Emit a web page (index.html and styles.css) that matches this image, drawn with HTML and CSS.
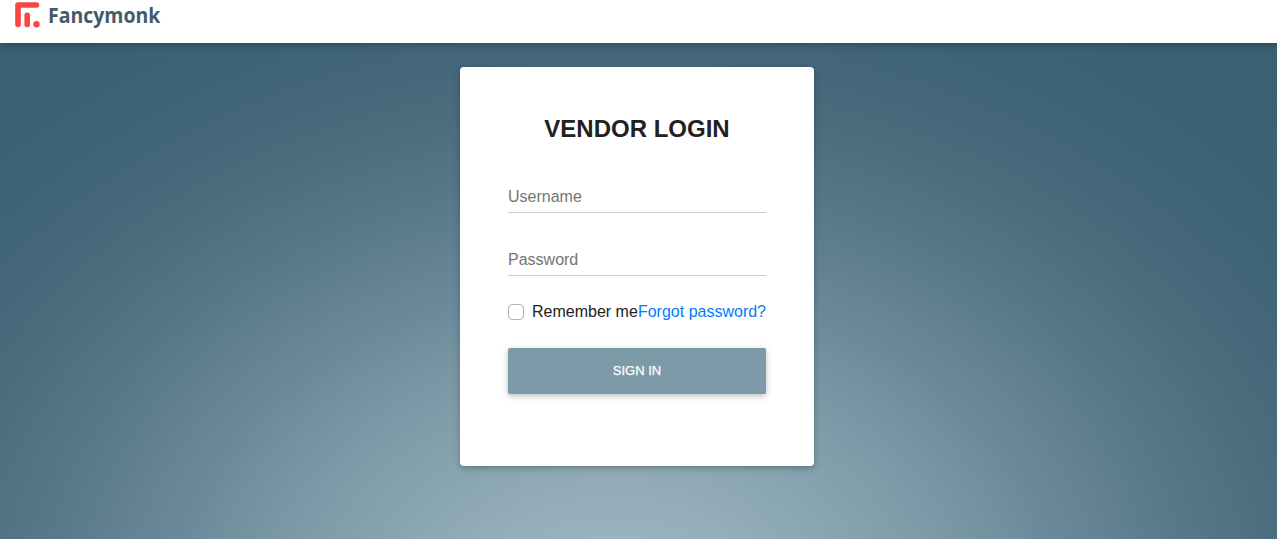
FILE: index.html
```html
<!DOCTYPE html>
<html lang="en">
<head>
<meta charset="utf-8">
<title>Fancymonk - Vendor Login</title>
<link rel="stylesheet" href="styles.css">
</head>
<body>
<header class="navbar">
  <a class="brand" href="#">
    <svg class="brand-mark" viewBox="0 0 26 26" width="26" height="26" fill="none" stroke="#fa4545" stroke-linecap="round" stroke-linejoin="round">
      <path d="M3 22.500V3H21.500" stroke-width="5.600"/>
      <path d="M12.200 13.200V22.400" stroke-width="5.600"/>
      <circle cx="21.500" cy="22.200" r="3.200" fill="#fa4545" stroke="none"/>
    </svg>
    <span class="brand-name">Fancymonk</span>
  </a>
</header>
<main class="page">
  <form class="card">
    <h1 class="title">VENDOR LOGIN</h1>
    <input class="field" type="text" placeholder="Username">
    <input class="field" type="password" placeholder="Password">
    <div class="options">
      <label class="remember"><input class="check" type="checkbox">Remember me</label>
      <a class="forgot" href="#">Forgot password?</a>
    </div>
    <button class="submit" type="button">SIGN IN</button>
  </form>
</main>
</body>
</html>
```
FILE: styles.css
```css
* { box-sizing: border-box; }
body {
  margin: 0;
  height: 539px;
  overflow: hidden;
  display: flex;
  flex-direction: column;
  font: 16px/24px "Liberation Sans", Arial, sans-serif;
  color: #212121;
  background: radial-gradient(850px 650px at 615px 620px,
    #a0b7c5 0%, #9bb2bf 12.5%, #90abb7 22%, #7d99a7 40%, #6a8998 53%,
    #5f7f90 62%, #557687 70%, #4c6f7f 78%, #45697a 86%, #406577 93%,
    #3d6275 100%, #3b6072 115%);
}
.navbar {
  flex: none;
  height: 43px;
  padding: 2px 15px;
  background: #fff;
  box-shadow: 0 2px 5px rgba(0,0,0,.16), 0 2px 10px rgba(0,0,0,.12);
}
.brand { display: flex; gap: 7px; text-decoration: none; }
.brand-name {
  font: 700 21.5px/26px "Open Sans", "Noto Sans", sans-serif;
  color: #455a69;
  transform: scaleX(.905);
  transform-origin: left;
}
.page { display: flex; justify-content: center; padding: 24px 3px 0 0; }
.card {
  width: 354px;
  height: 399px;
  padding: 48px;
  display: flex;
  flex-direction: column;
  background: #fff;
  border-radius: 4px;
  box-shadow: 0 2px 5px rgba(0,0,0,.16), 0 2px 10px rgba(0,0,0,.12);
}
.title {
  margin: 0 0 36px;
  font-size: 24px;
  line-height: 28px;
  text-align: center;
}
.field {
  width: 100%;
  height: 34px;
  margin: 0 0 29px;
  padding: 2px 0 0;
  border: 0;
  border-bottom: 1px solid #cdcdcd;
  background: transparent;
  font: inherit;
}
.field + .options { margin-top: -5px; }
.field::placeholder { color: #757575; opacity: 1; }
.options { display: flex; justify-content: space-between; white-space: nowrap; }
.remember { display: flex; align-items: center; gap: 8px; }
.check {
  appearance: none;
  width: 16px;
  height: 16px;
  margin: 0;
  border: 1px solid #adb5bd;
  border-radius: 4px;
  background: #fff;
}
.forgot { color: #007bff; text-decoration: none; }
.submit {
  height: 46px;
  margin: 24px 0 0;
  padding: 0 0 2px;
  border: 0;
  border-radius: 2px;
  background: #7c9aa8;
  color: #fff;
  font: 13px "Liberation Sans", Arial, sans-serif;
  -webkit-text-stroke: .25px #fff;
  box-shadow: 0 2px 5px rgba(0,0,0,.16), 0 2px 10px rgba(0,0,0,.12);
}
```
